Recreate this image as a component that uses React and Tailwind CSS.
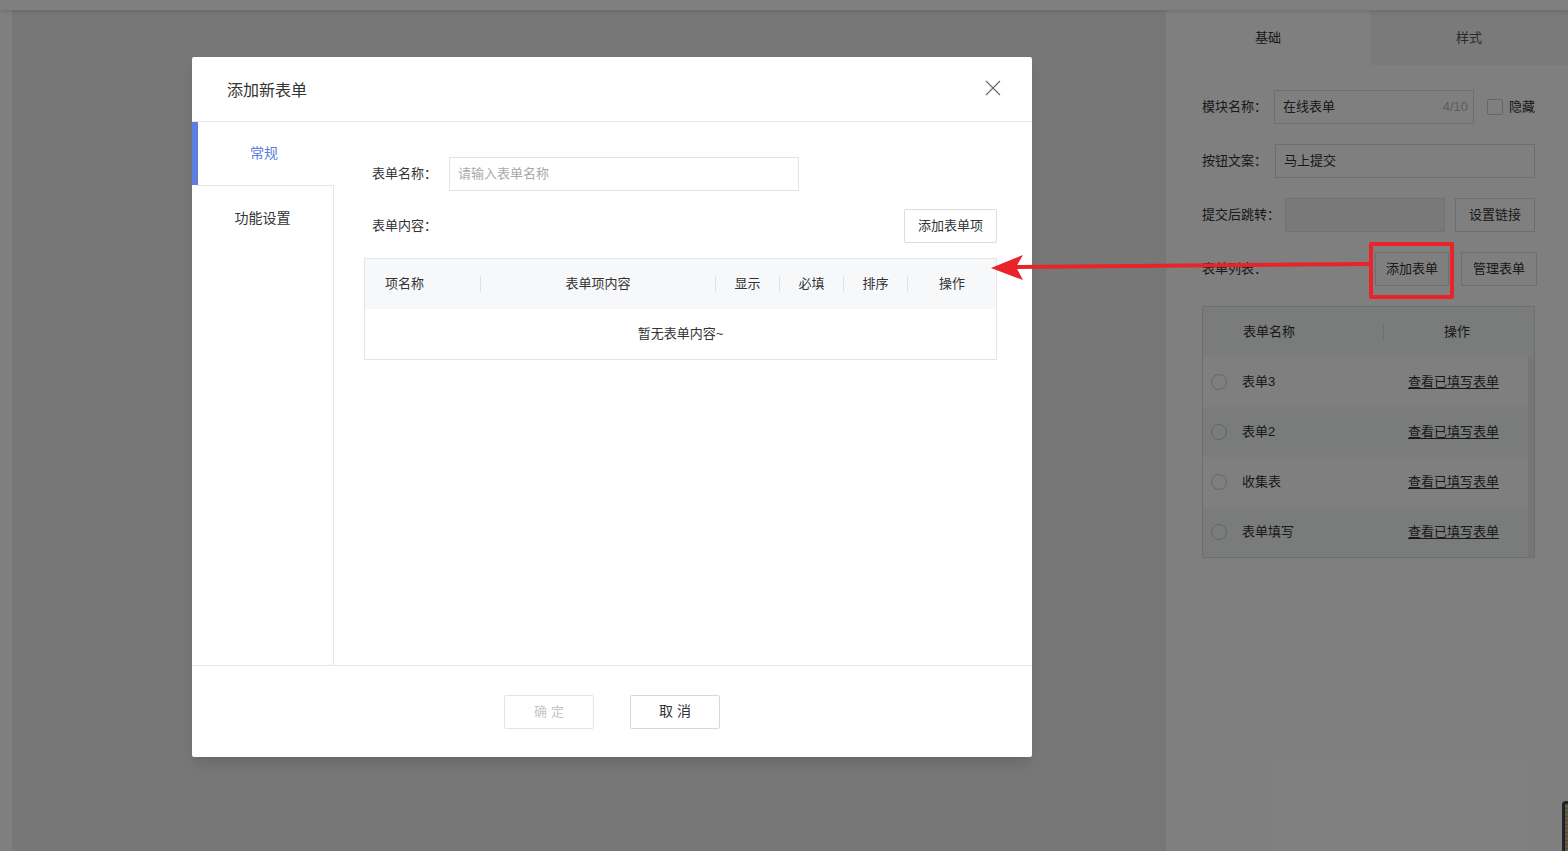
const formRows = ["表单3", "表单2", "收集表", "表单填写"];

const cols = [
  { name: "项名称", w: "w-[115px]", left: true },
  { name: "表单项内容", w: "w-[235px]" },
  { name: "显示", w: "w-[64px]" },
  { name: "必填", w: "w-[64px]" },
  { name: "排序", w: "w-[64px]" },
  { name: "操作", w: "flex-1" },
];

function CloseIcon() {
  return (
    <svg width="16" height="16" viewBox="0 0 16 16" className="text-[#666]">
      <path d="M1 1 L15 15 M15 1 L1 15" stroke="currentColor" strokeWidth="1.1" fill="none" />
    </svg>
  );
}

function SidePanel() {
  return (
    <div className="w-[402px] bg-white flex flex-col text-[13px] text-[#333]">
      <div className="flex h-[55px]">
        <div className="w-[204px] flex items-center justify-center">基础</div>
        <div className="flex-1 flex items-center justify-center bg-[#f4f4f4] text-[#555]">样式</div>
      </div>

      <div className="pl-[36px] pt-[25px] flex flex-col gap-[20px]">
        <div className="flex items-center h-[34px]">
          <span className="w-[72px]">模块名称：</span>
          <div className="w-[200px] h-[34px] border border-[#ddd] flex items-center justify-between pl-[8px] pr-[5px]">
            <span>在线表单</span>
            <span className="text-[#bbb]">4/10</span>
          </div>
          <span className="ml-[13px] w-[16px] h-[16px] border border-[#ccc] rounded-[2px] bg-white" />
          <span className="ml-[6px]">隐藏</span>
        </div>

        <div className="flex items-center h-[34px]">
          <span className="w-[73px]">按钮文案：</span>
          <div className="w-[260px] h-[34px] border border-[#ddd] flex items-center px-[8px]">马上提交</div>
        </div>

        <div className="flex items-center h-[34px]">
          <span className="w-[83px]">提交后跳转：</span>
          <div className="w-[160px] h-[34px] border border-[#e3e3e3] bg-[#f2f2f2]" />
          <div className="ml-[10px] w-[80px] h-[34px] border border-[#ddd] flex items-center justify-center">设置链接</div>
        </div>

        <div className="flex items-center h-[34px]">
          <span className="w-[173px]">表单列表：</span>
          <div className="w-[74px] h-[34px] border border-[#ddd] flex items-center justify-center">添加表单</div>
          <div className="ml-[12px] w-[76px] h-[34px] border border-[#ddd] flex items-center justify-center">管理表单</div>
        </div>

        <div className="w-[333px] border border-[#dcdcdc] bg-[#f5f6f7]">
          <div className="h-[50px] flex items-center">
            <div className="w-[180px] pl-[40px] h-full flex items-center">表单名称</div>
            <div className="w-px h-[16px] bg-[#ddd]" />
            <div className="flex-1 text-center pr-[4px]">操作</div>
          </div>
          <div className="flex">
            <div className="flex-1">
              {formRows.map((r, i) => (
                <div
                  key={r}
                  className={`h-[50px] flex items-center ${i % 2 === 0 ? "bg-white" : "bg-[#f5f6f7]"}`}
                >
                  <span className="ml-[8px] w-[16px] h-[16px] rounded-full border border-[#ccc]" />
                  <span className="ml-[15px] w-[166px]">{r}</span>
                  <span className="underline underline-offset-2">查看已填写表单</span>
                </div>
              ))}
            </div>
            <div className="w-[6px] bg-[#ececec]" />
          </div>
        </div>
      </div>
    </div>
  );
}

function Modal() {
  return (
    <div className="absolute left-[192px] top-[57px] w-[840px] h-[700px] bg-white rounded-[2px] shadow-lg flex flex-col text-[13px] text-[#333]">
      <div className="h-[65px] border-b border-[#e8e8e8] flex items-center justify-between pl-[35px] pr-[31px] pt-[3px]">
        <span className="text-[16px]">添加新表单</span>
        <span className="-mt-[5px]">
          <CloseIcon />
        </span>
      </div>

      <div className="flex-1 flex border-b border-[#e8e8e8]">
        <div className="w-[142px] flex flex-col">
          <div className="h-[63px] flex items-center border-l-[6px] border-[#5b7ee0] text-[#5b7ee0] text-[14px]">
            <span className="w-full text-center pr-[4px]">常规</span>
          </div>
          <div className="flex-1 border-t border-r border-[#e5e5e5] ml-[5px]">
            <div className="h-[65px] flex items-center justify-center text-[14px] pr-[5px]">功能设置</div>
          </div>
        </div>

        <div className="flex-1 pl-[30px] pr-[35px] pt-[35px]">
          <div className="flex items-center h-[34px] pl-[8px]">
            <span className="w-[77px]">表单名称：</span>
            <div className="w-[350px] h-[34px] border border-[#e3e3e3] flex items-center px-[8px] text-[#aaa]">
              请输入表单名称
            </div>
          </div>

          <div className="mt-[18px] flex items-center justify-between h-[34px] pl-[8px]">
            <span>表单内容：</span>
            <div className="w-[93px] h-[34px] border border-[#dcdcdc] rounded-[2px] flex items-center justify-center">
              添加表单项
            </div>
          </div>

          <div className="mt-[15px] border border-[#e5e5e5]">
            <div className="h-[50px] bg-[#f7f8fa] flex items-center">
              {cols.map((c, i) => (
                <div key={c.name} className={`${c.w} h-full flex items-center`}>
                  {i > 0 && <span className="w-px h-[16px] bg-[#e2e2e2]" />}
                  <span className={c.left ? "pl-[20px]" : "flex-1 text-center"}>{c.name}</span>
                </div>
              ))}
            </div>
            <div className="h-[50px] flex items-center justify-center">暂无表单内容~</div>
          </div>
        </div>
      </div>

      <div className="h-[91px] flex items-center justify-center gap-[36px]">
        <div className="w-[90px] h-[34px] border border-[#e5e5e5] rounded-[2px] flex items-center justify-center text-[#c5c5c5] tracking-[4px] pl-[4px]">
          确定
        </div>
        <div className="w-[90px] h-[34px] border border-[#d9d9d9] rounded-[2px] flex items-center justify-center tracking-[4px] pl-[4px] text-[14px]">
          取消
        </div>
      </div>
    </div>
  );
}

export default function App() {
  return (
    <div className="relative w-[1568px] h-[851px] overflow-hidden bg-white font-['Liberation_Sans','Noto_Sans_CJK_SC',sans-serif]">
      <div className="h-[10px] bg-white shadow-[0_2px_4px_rgba(0,0,0,0.12)] relative" />
      <div className="flex h-[841px]">
        <div className="w-[12px] bg-white" />
        <div className="flex-1 bg-[#eeeeee]" />
        <SidePanel />
      </div>

      {/* floating widget at the very edge */}
      <div className="absolute left-[1562px] top-[801px] w-[12px] h-[60px] rounded-tl-[3px] bg-[#3b4350] border border-[#556] p-[2px]">
        <div className="w-full h-full bg-[repeating-linear-gradient(to_bottom,#e57373_0px,#e57373_1px,#ffd54f_2px,#81c784_3px,#4fc3f7_4px)]" />
      </div>

      <div className="absolute inset-0 bg-black/50" />

      <Modal />

      {/* annotation */}
      <div className="absolute left-[1369px] top-[242px] w-[85px] h-[57px] border-[4px] border-[#e8232a] rounded-[2px]" />
      <svg className="absolute left-0 top-0 pointer-events-none" width="1568" height="851">
        <line x1="1016" y1="267" x2="1371" y2="264" stroke="#e8232a" strokeWidth="4" />
        <polygon points="991,268 1023,255 1016,267 1023,280" fill="#e8232a" />
      </svg>
    </div>
  );
}
